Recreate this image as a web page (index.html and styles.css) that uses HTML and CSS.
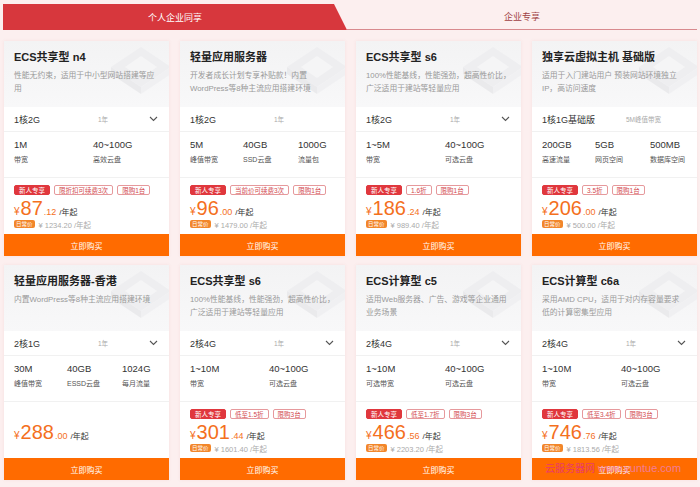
FILE: index.html
```html
<!DOCTYPE html>
<html lang="zh-CN">
  <head>
    <meta charset="UTF-8" />
    <meta name="viewport" content="width=device-width, initial-scale=1.0" />
    <title>云服务器优惠</title>
    <link rel="stylesheet" href="styles.css">
  </head>
  <body>
    <div class="page">
      <div class="tabs">
        <div class="tab tab-active">个人企业同享</div>
        <div class="tab tab-other">企业专享</div>
      </div>

      <div class="cards">
        <!-- cards rendered from data below -->
      </div>

      <div class="watermark"><span class="wm-name">云服务器网</span><span class="wm-url">www.yuntue.com</span></div>
    </div>

    <script>
      const products = [
        { title: "ECS共享型 n4", desc: "性能无约束，适用于中小型网站搭建等应用", sel: "1核2G", sub: "1年", arrow: true,
          specs: [["1M", "带宽"], ["40~100G", "高效云盘"]],
          tags: ["限折扣可续费3次", "限购1台"], int: "87", dec: ".12", orig: "¥ 1234.20 /年起" },
        { title: "轻量应用服务器", desc: "开发者成长计划专享补贴款！内置WordPress等8种主流应用搭建环境", sel: "1核2G", sub: "1年", arrow: false,
          specs: [["5M", "峰值带宽"], ["40GB", "SSD云盘"], ["1000G", "流量包"]],
          tags: ["当前价可续费3次", "限购1台"], int: "96", dec: ".00", orig: "¥ 1479.00 /年起" },
        { title: "ECS共享型 s6", desc: "100%性能基线，性能强劲，超高性价比，广泛适用于建站等轻量应用", sel: "1核2G", sub: "1年", arrow: true,
          specs: [["1~5M", "带宽"], ["40~100G", "可选云盘"]],
          tags: ["1.6折", "限购1台"], int: "186", dec: ".24", orig: "¥ 989.40 /年起" },
        { title: "独享云虚拟主机 基础版", desc: "适用于入门建站用户 预装网站环境独立IP，高访问速度", sel: "1核1G基础版", sub: "5M峰值带宽", arrow: false,
          specs: [["200GB", "高速流量"], ["5GB", "网页空间"], ["500MB", "数据库空间"]],
          tags: ["3.5折", "限购1台"], int: "206", dec: ".00", orig: "¥ 500.00 /年起" },
        { title: "轻量应用服务器-香港", desc: "内置WordPress等8种主流应用搭建环境", sel: "2核1G", sub: "1年", arrow: true,
          specs: [["30M", "峰值带宽"], ["40GB", "ESSD云盘"], ["1024G", "每月流量"]],
          tags: [], int: "288", dec: ".00", orig: "" },
        { title: "ECS共享型 s6", desc: "100%性能基线，性能强劲，超高性价比，广泛适用于建站等轻量应用", sel: "2核4G", sub: "1年", arrow: true,
          specs: [["1~10M", "带宽"], ["40~100G", "可选云盘"]],
          tags: ["低至1.5折", "限购3台"], int: "301", dec: ".44", orig: "¥ 1601.40 /年起" },
        { title: "ECS计算型 c5", desc: "适用Web服务器、广告、游戏等企业通用业务场景", sel: "2核4G", sub: "1年", arrow: true,
          specs: [["1~10M", "可选带宽"], ["40~100G", "可选云盘"]],
          tags: ["低至1.7折", "限购3台"], int: "466", dec: ".56", orig: "¥ 2203.20 /年起" },
        { title: "ECS计算型 c6a", desc: "采用AMD CPU，适用于对内存容量要求低的计算密集型应用", sel: "2核4G", sub: "1年", arrow: true,
          specs: [["1~10M", "带宽"], ["40~100G", "可选云盘"]],
          tags: ["低至3.4折", "限购3台"], int: "746", dec: ".76", orig: "¥ 1813.56 /年起" },
      ];

      const chip = `
        <svg class="chip" width="66" height="62" viewBox="0 0 66 62">
          <polygon points="34,4 64,24 34,44 4,24" fill="#eeeef0" />
          <polygon points="4,24 34,44 34,51 4,31" fill="#eaeaec" />
          <polygon points="34,44 64,24 64,31 34,51" fill="#f0f0f2" />
          <polygon points="34,13 50,24 34,35 18,24" fill="#f5f5f6" />
        </svg>`;

      const arrow = `<svg class="arrow" width="9" height="6" viewBox="0 0 9 6"><path d="M1 1 L4.5 4.5 L8 1" fill="none" stroke="#555" stroke-width="1.1" /></svg>`;

      function renderCards() {
        const box = document.querySelector(".cards");
        products.forEach((p) => {
          const specs = p.specs.map((s) => `<div class="spec"><div class="spec-val">${s[0]}</div><div class="spec-label">${s[1]}</div></div>`).join("");
          const tags = p.tags.length
            ? `<span class="tag tag-new">新人专享</span>` + p.tags.map((t) => `<span class="tag">${t}</span>`).join("")
            : "";
          const orig = p.orig ? `<span class="orig-tag">日常价</span><span>${p.orig}</span>` : "";

          box.innerHTML += `
            <div class="card">
              <div class="card-top">
                ${chip}
                <h2>${p.title}</h2>
                <p>${p.desc}</p>
              </div>
              <div class="select-row">
                <span class="sel">${p.sel}</span>
                <span class="sel-sub">${p.sub}</span>
                ${p.arrow ? arrow : ""}
              </div>
              <div class="specs cols-${p.specs.length}">${specs}</div>
              <div class="promo">
                <div class="tags">${tags}</div>
                <div class="price"><span class="yen">¥</span><span class="int">${p.int}</span><span class="dec">${p.dec}</span><span class="unit">/年起</span></div>
                <div class="orig">${orig}</div>
              </div>
              <div class="buy">立即购买</div>
            </div>
          `;
        });
      }

      renderCards();
    </script>
  </body>
</html>
```

FILE: styles.css
```css
body {
  margin: 0;
  background-color: #fcefef;
  font-family: 'Liberation Sans', 'Noto Sans CJK SC', sans-serif;
  color: #333;
}

.page {
  position: relative;
  padding: 4px 3px 5px 4px;
}

.tabs {
  display: flex;
  height: 26px;
}

.tab {
  display: flex;
  align-items: center;
  justify-content: center;
  font-size: 9px;
}

.tab-active {
  width: 344px;
  margin-left: -1px;
  background-color: #d7373d;
  color: white;
  clip-path: polygon(0 0, calc(100% - 13px) 0, 100% 100%, 0 100%);
}

.tab-other {
  flex-grow: 1;
  color: #9f3f44;
  border-bottom: 1px solid #d88a8e;
}

.cards {
  margin-top: 11px;
  display: grid;
  grid-template-columns: repeat(4, 165px);
  column-gap: 11px;
  row-gap: 9px;
}

.card {
  background-color: white;
  box-shadow: 0 0 3px rgba(200, 120, 120, 0.12);
  display: flex;
  flex-direction: column;
}

.card-top {
  position: relative;
  height: 66px;
  box-sizing: border-box;
  padding: 9px 10px 0;
  background: linear-gradient(180deg, #f3f3f4 0%, #f8f8f9 100%);
  overflow: hidden;
}

.chip {
  position: absolute;
  top: 2px;
  right: -4px;
}

.card-top h2 {
  position: relative;
  margin: 0;
  font-size: 11px;
  line-height: 14px;
  font-weight: bold;
  color: #222;
}

.card-top p {
  position: relative;
  margin: 5px 0 0;
  font-size: 7.8px;
  line-height: 13px;
  color: #999;
  overflow-wrap: break-word;
}

.select-row {
  height: 25px;
  box-sizing: border-box;
  padding: 0 11px 0 10px;
  display: flex;
  align-items: center;
  border-bottom: 1px solid #f1f1f1;
}

.sel {
  width: 84px;
  font-size: 9px;
  color: #333;
}

.sel-sub {
  font-size: 6.5px;
  color: #aaa;
}

.arrow {
  margin-left: auto;
}

.specs {
  height: 45px;
  box-sizing: border-box;
  padding: 7px 10px 0;
  display: grid;
}

.specs.cols-2 {
  grid-template-columns: 79px auto;
}

.specs.cols-3 {
  grid-template-columns: 53px 55px auto;
}

.spec-val {
  font-size: 9.5px;
  line-height: 12px;
  color: #333;
}

.spec-label {
  margin-top: 4px;
  font-size: 7px;
  line-height: 10px;
  color: #555;
}

.promo {
  height: 57px;
  box-sizing: border-box;
  padding: 7px 10px 0;
  border-top: 1px solid #f1f1f1;
}

.tags {
  display: flex;
  gap: 4px;
  height: 10px;
}

.tag {
  display: flex;
  align-items: center;
  height: 10px;
  box-sizing: border-box;
  padding: 0 4px;
  border: 1px solid #e6999c;
  border-radius: 2px;
  font-size: 6.5px;
  color: #d2494e;
}

.tag-new {
  background-color: #e0373d;
  border-color: #e0373d;
  color: white;
}

.price {
  margin-top: 3px;
  height: 20px;
  display: flex;
  align-items: baseline;
  color: #f4701d;
}

.yen {
  font-size: 10px;
  margin-right: 1px;
}

.int {
  font-size: 20px;
  line-height: 20px;
}

.dec {
  font-size: 9px;
  margin-left: 1px;
  margin-right: 3px;
}

.unit {
  font-size: 8px;
  color: #333;
}

.orig {
  margin-top: 1px;
  height: 10px;
  display: flex;
  align-items: center;
  gap: 4px;
  font-size: 7.5px;
  color: #aaa;
}

.orig-tag {
  background-color: #f2862a;
  color: white;
  font-size: 5.5px;
  line-height: 8px;
  padding: 0 2px;
  border-radius: 2px;
}

.buy {
  height: 22px;
  display: flex;
  align-items: center;
  justify-content: center;
  background-color: #ff6b00;
  color: white;
  font-size: 8px;
}

.watermark {
  position: absolute;
  left: 545px;
  top: 460px;
  display: flex;
  align-items: baseline;
  gap: 3px;
  white-space: nowrap;
  opacity: 0.85;
  pointer-events: none;
}

.wm-name {
  color: #e8337c;
  font-size: 10px;
}

.wm-url {
  color: #f27fb0;
  font-size: 11px;
}
```
